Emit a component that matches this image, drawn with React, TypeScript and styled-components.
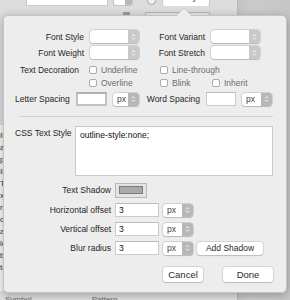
/*********************************************************
* IMPORTS
*********************************************************/
import { ReactElement } from 'react';
import styled, { createGlobalStyle } from 'styled-components';

/*********************************************************
*   STYLES
*********************************************************/
const GlobalStyle = createGlobalStyle`
    html, body {
        margin: 0;
        padding: 0;
        background: #d9d9d9;
    }
    * {
        box-sizing: border-box;
    }
    body {
        font-family: "Liberation Sans", Arial, Helvetica, sans-serif;
    }
`;

const Screen = styled.div`
    position: relative;
    width: 290px;
    height: 300px;
    overflow: hidden;
`;

/* BACKDROP (window behind the popover) *****************/
const Backdrop = styled.div`
    display: grid;
    grid-template-columns: 237px 1fr;
    height: 100%;
`;

const MainPane = styled.div`
    display: flex;
    flex-direction: column;
    background: #dcdcdc;
`;

const SidePane = styled.div`
    background: linear-gradient(to right, #c2c2c2, #cacaca 20%, #c6c6c6);
    border-left: 1px solid #b9b9b9;
`;

const Toolbar = styled.div`
    height: 6px;
    display: flex;
    align-items: flex-end;
    overflow: hidden;
    padding-left: 26px;
`;

const ToolInput = styled.div`
    width: 82px;
    height: 16px;
    background: #fff;
    border: 1px solid #c8c8c8;
    flex-shrink: 0;
`;

const ToolSelect = styled.div`
    width: 20px;
    height: 16px;
    margin-left: 5px;
    border-radius: 3px;
    background: linear-gradient(to right, #fff 60%, #b9b9b9 60%);
    border: 1px solid #c4c4c4;
    flex-shrink: 0;
`;

const ToolCircle = styled.div`
    width: 9px;
    height: 9px;
    margin-left: 14px;
    margin-bottom: 1px;
    border-radius: 50%;
    border: 1px solid #a5a5a5;
    background: #f0f0f0;
    flex-shrink: 0;
`;

const ToolButton = styled.div`
    width: 48px;
    height: 16px;
    margin-left: 6px;
    margin-bottom: -1px;
    background: #fff;
    border: 1px solid #c8c8c8;
    border-radius: 3px;
    flex-shrink: 0;
    font-size: 9px;
    color: #333;
    text-align: center;
    line-height: 10px;
`;

const SubBar = styled.div`
    height: 9px;
    display: flex;
    align-items: flex-end;
    padding-left: 123px;
    gap: 15px;
`;

const SubKnob = styled.div`
    width: 7px;
    height: 3px;
    background: #9a9a9a;
`;

const SubBox = styled.div`
    width: 65px;
    height: 3px;
    border: 1px solid #b5b5b5;
    border-bottom: none;
    background: #e6e6e6;
`;

const Body = styled.div`
    flex: 1;
    display: flex;
    padding-top: 110px;
`;

const SideList = styled.div`
    width: 30px;
    background: #f7f7f7;
    display: flex;
    flex-direction: column;
    gap: 3px;
    padding-top: 6px;
    font-size: 8px;
    color: #333;
`;

const BottomRow = styled.div`
    height: 9px;
    display: flex;
    gap: 60px;
    padding: 4px 0 0 5px;
    font-size: 8px;
    line-height: 10px;
    color: #666;
    overflow: hidden;
`;

/* POPOVER **********************************************/
const Popover = styled.div`
    position: absolute;
    left: 3px;
    top: 15px;
    width: 284px;
    height: 278px;
    background: #ededed;
    border: 1px solid #c4c4c4;
    border-radius: 5px;
    box-shadow: 0 2px 9px rgba(0, 0, 0, 0.28);
    padding: 14px 13px 0 11px;
    display: flex;
    flex-direction: column;
    color: #262626;
    font-size: 8.5px;
`;

const Arrow = styled.svg`
    position: absolute;
    left: 171px;
    top: -9px;
    width: 18px;
    height: 10px;
`;

const FontGrid = styled.div`
    display: grid;
    grid-template-columns: 69px 49px 60px 49px;
    grid-auto-rows: 13px;
    column-gap: 6px;
    row-gap: 3px;
    align-items: center;
`;

const Label = styled.span<{ $align?: 'left' | 'right' }>`
    text-align: ${({ $align }) => $align || 'right'};
    white-space: nowrap;
    line-height: 10px;
`;

const SelectBox = styled.div<{ $width?: number }>`
    width: ${({ $width }) => ($width ? `${$width}px` : '100%')};
    height: 13px;
    display: flex;
    background: #fff;
    border-radius: 3px;
    box-shadow: 0 0 0 0.5px #b9b9b9, 0 0.5px 1px rgba(0, 0, 0, 0.2);
    overflow: hidden;
    font-size: 8.5px;
    color: #444;
`;

const SelectValue = styled.span`
    flex: 1;
    padding-left: 4px;
    line-height: 13px;
`;

const SelectKnob = styled.span<{ $light?: boolean }>`
    width: 11px;
    display: flex;
    align-items: center;
    justify-content: center;
    background: ${({ $light }) => ($light ? '#c9c9c9' : '#b7b7b7')};
`;

const DecoGrid = styled.div`
    margin-top: 5px;
    display: grid;
    grid-template-columns: 74px 71px 52px 1fr;
    grid-auto-rows: 11px;
    row-gap: 2px;
    align-items: center;
`;

const DecoLabel = styled.span`
    text-align: right;
    padding-right: 10px;
    white-space: nowrap;
`;

const Check = styled.label`
    display: flex;
    align-items: center;
    gap: 4px;
    color: #6e6e6e;
    white-space: nowrap;
`;

const CheckBox = styled.span`
    width: 8px;
    height: 8px;
    background: #fff;
    border: 1px solid #ababab;
    border-radius: 2px;
    flex-shrink: 0;
`;

const SpacingGrid = styled.div`
    margin-top: 4px;
    display: grid;
    grid-template-columns: 55px 31px 26px 55px 30px 30px;
    column-gap: 6px;
    align-items: center;
`;

const TextInput = styled.div<{ $focused?: boolean; $width?: number }>`
    width: ${({ $width }) => ($width ? `${$width}px` : '100%')};
    height: 14px;
    background: #fff;
    border: ${({ $focused }) => ($focused ? '2px solid #c2c2c2' : '1px solid #cbcbcb')};
    border-top-color: ${({ $focused }) => ($focused ? '#b0b0b0' : '#bdbdbd')};
    padding-left: 3px;
    font-size: 8.5px;
    line-height: 12px;
    color: #111;
`;

const Separator = styled.hr`
    margin: 10px 0 0 4px;
    border: none;
    border-top: 1px solid #d2d2d2;
    height: 0;
`;

const CssGrid = styled.div`
    margin-top: 9px;
    display: grid;
    grid-template-columns: 60px 1fr;
    align-items: start;
`;

const CssLabel = styled.span`
    padding-top: 2px;
    white-space: nowrap;
`;

const TextArea = styled.div`
    height: 50px;
    background: #fff;
    border: 1px solid #c9c9c9;
    padding: 3px 4px;
    font-size: 8.5px;
    color: #111;
`;

const ShadowGrid = styled.div`
    margin-top: 6px;
    display: grid;
    grid-template-columns: 96px 44px 30px 66px;
    grid-template-rows: 16px 14px 14px 14px;
    column-gap: 4px;
    row-gap: 5px;
    align-items: center;
`;

const ColorWell = styled.div`
    width: 32px;
    height: 15px;
    background: #e4e4e4;
    border: 1px solid #b8b8b8;
    display: flex;
    align-items: center;
    justify-content: center;
`;

const Swatch = styled.div<{ $color: string }>`
    width: 24px;
    height: 8px;
    background: ${({ $color }) => $color};
    border: 1px solid #7b7b7b;
`;

const Button = styled.button<{ $width: number; $height?: number; $size?: number }>`
    width: ${({ $width }) => $width}px;
    height: ${({ $height }) => $height || 13}px;
    padding: 0;
    background: #fff;
    border: none;
    border-radius: 3px;
    box-shadow: 0 0 0 0.5px #bdbdbd, 0 0.5px 1px rgba(0, 0, 0, 0.2);
    font-family: "Liberation Sans", Arial, sans-serif;
    font-size: ${({ $size }) => $size || 8.5}px;
    color: #2a2a2a;
    justify-self: end;
`;

const Actions = styled.div`
    margin-top: 12px;
    display: flex;
    justify-content: flex-end;
    gap: 20px;
`;

/*********************************************************
*   DATA
*********************************************************/
const listItems = ['Il', 'ab', 'po', 'Il', 'Ty', 'xe', 'rz', 'de', 'ax', 'lo', 'bl', 'ta'];

/*********************************************************
*   COMPONENTS
*********************************************************/
const Chevrons = (): ReactElement => (
    <svg width="5" height="8" viewBox="0 0 5 8">
        <path d="M1 3.2 L2.5 1.6 L4 3.2 M1 4.8 L2.5 6.4 L4 4.8" stroke="#fff" strokeWidth="0.9" fill="none" />
    </svg>
);

type SelectProps = {
    value?: string,
    width?: number,
    light?: boolean
};

const Select = ({ value, width, light }: SelectProps): ReactElement => (
    <SelectBox $width={width}>
        <SelectValue>{value}</SelectValue>
        <SelectKnob $light={light}><Chevrons /></SelectKnob>
    </SelectBox>
);

const Checkbox = ({ label }: { label: string }): ReactElement => (
    <Check>
        <CheckBox />
        {label}
    </Check>
);

/*********************************************************
*   APP
*********************************************************/
const App = (): ReactElement => {
    return (
        <>
            <GlobalStyle />
            <Screen>
                <Backdrop>
                    <MainPane>
                        <Toolbar>
                            <ToolInput />
                            <ToolSelect />
                            <ToolCircle />
                            <ToolButton>Font Styles</ToolButton>
                        </Toolbar>
                        <SubBar>
                            <SubKnob />
                            <SubBox />
                        </SubBar>
                        <Body>
                            <SideList>
                                {listItems.map((item, i) => <span key={i}>{item}</span>)}
                            </SideList>
                        </Body>
                        <BottomRow>
                            <span>Symbol</span>
                            <span>Pattern</span>
                        </BottomRow>
                    </MainPane>
                    <SidePane />
                </Backdrop>

                <Popover>
                    <Arrow viewBox="0 0 18 10">
                        <path d="M0 10 L9 1 L18 10 Z" fill="#ededed" stroke="#c4c4c4" strokeWidth="1" />
                        <rect x="0" y="9" width="18" height="2" fill="#ededed" />
                    </Arrow>

                    <FontGrid>
                        <Label>Font Style</Label>
                        <Select light />
                        <Label>Font Variant</Label>
                        <Select light />
                        <Label>Font Weight</Label>
                        <Select light />
                        <Label>Font Stretch</Label>
                        <Select light />
                    </FontGrid>

                    <DecoGrid>
                        <DecoLabel>Text Decoration</DecoLabel>
                        <Checkbox label="Underline" />
                        <Checkbox label="Line-through" />
                        <span />
                        <span />
                        <Checkbox label="Overline" />
                        <Checkbox label="Blink" />
                        <Checkbox label="Inherit" />
                    </DecoGrid>

                    <SpacingGrid>
                        <Label $align="left">Letter Spacing</Label>
                        <TextInput $focused />
                        <Select value="px" />
                        <Label>Word Spacing</Label>
                        <TextInput />
                        <Select value="px" />
                    </SpacingGrid>

                    <Separator />

                    <CssGrid>
                        <CssLabel>CSS Text Style</CssLabel>
                        <TextArea>outline-style:none;</TextArea>
                    </CssGrid>

                    <ShadowGrid>
                        <Label>Text Shadow</Label>
                        <ColorWell><Swatch $color="#a9a9a9" /></ColorWell>
                        <span />
                        <span />

                        <Label>Horizontal offset</Label>
                        <TextInput>3</TextInput>
                        <Select value="px" />
                        <span />

                        <Label>Vertical offset</Label>
                        <TextInput>3</TextInput>
                        <Select value="px" />
                        <span />

                        <Label>Blur radius</Label>
                        <TextInput>3</TextInput>
                        <Select value="px" />
                        <Button $width={66}>Add Shadow</Button>
                    </ShadowGrid>

                    <Actions>
                        <Button $width={40} $height={15} $size={9.5}>Cancel</Button>
                        <Button $width={50} $height={15} $size={9.5}>Done</Button>
                    </Actions>
                </Popover>
            </Screen>
        </>
    );
};

/*********************************************************
*   EXPORT
*********************************************************/
export default App;
